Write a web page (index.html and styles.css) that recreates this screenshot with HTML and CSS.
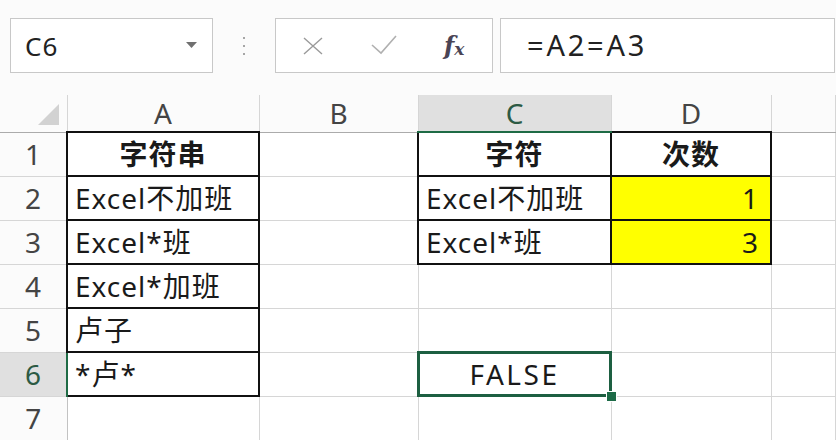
FILE: index.html
```html
<!DOCTYPE html>
<html lang="zh-CN">
<head>
    <meta charset="UTF-8">
    <title>Excel - C6</title>
    <link rel="stylesheet" href="styles.css">
</head>
<body>
    <div class="formula-bar">
        <div class="name-box">
            <span>C6</span>
            <svg class="caret" width="11" height="6" viewBox="0 0 11 6"><path d="M0 0 H11 L5.5 6 Z" fill="#707070"/></svg>
        </div>
        <div class="grip"><i></i><i></i><i></i></div>
        <div class="buttons">
            <svg class="btn-x" width="20" height="18" viewBox="0 0 20 18"><path d="M1 1 L19 17 M19 1 L1 17" stroke="#9a9a9a" stroke-width="1.4" fill="none"/></svg>
            <svg class="btn-ok" width="26" height="20" viewBox="0 0 26 20"><path d="M1 10 L10 18 L25 1" stroke="#b0b0b0" stroke-width="1.6" fill="none"/></svg>
            <span class="fx"><i>f</i><sub>x</sub></span>
        </div>
        <div class="formula-input">=A2=A3</div>
    </div>

    <table class="sheet">
        <colgroup>
            <col class="c-rh">
            <col class="c-a">
            <col class="c-b">
            <col class="c-c">
            <col class="c-d">
            <col>
        </colgroup>
        <tr class="head">
            <th class="corner"><span class="tri"></span></th>
            <th>A</th>
            <th>B</th>
            <th class="sel">C</th>
            <th>D</th>
            <th></th>
        </tr>
        <tr>
            <th class="rh">1</th>
            <td class="box bold center">字符串</td>
            <td></td>
            <td class="box bold center">字符</td>
            <td class="box bold center">次数</td>
            <td></td>
        </tr>
        <tr>
            <th class="rh">2</th>
            <td class="box">Excel不加班</td>
            <td></td>
            <td class="box">Excel不加班</td>
            <td class="box yellow num">1</td>
            <td></td>
        </tr>
        <tr>
            <th class="rh">3</th>
            <td class="box">Excel*班</td>
            <td></td>
            <td class="box">Excel*班</td>
            <td class="box yellow num">3</td>
            <td></td>
        </tr>
        <tr>
            <th class="rh">4</th>
            <td class="box">Excel*加班</td>
            <td></td>
            <td></td>
            <td></td>
            <td></td>
        </tr>
        <tr>
            <th class="rh">5</th>
            <td class="box">卢子</td>
            <td></td>
            <td></td>
            <td></td>
            <td></td>
        </tr>
        <tr>
            <th class="rh sel">6</th>
            <td class="box">*卢*</td>
            <td></td>
            <td class="active center">FALSE</td>
            <td></td>
            <td></td>
        </tr>
        <tr>
            <th class="rh">7</th>
            <td></td>
            <td></td>
            <td></td>
            <td></td>
            <td></td>
        </tr>
    </table>
</body>
</html>
```

FILE: styles.css
```css
body {
    margin: 0;
    background: #fbfbfb;
    font-family: "Noto Sans", "Noto Sans CJK SC", sans-serif;
    color: #1a1a1a;
    overflow: hidden;
}

/* formula bar */
.formula-bar {
    display: flex;
    align-items: flex-start;
    height: 95px;
    padding-top: 18px;
    box-sizing: border-box;
}
.name-box {
    margin-left: 10px;
    width: 203px;
    height: 55px;
    box-sizing: border-box;
    border: 1px solid #c8c8c8;
    background: #fff;
    display: flex;
    align-items: center;
    justify-content: space-between;
    padding: 0 15px 0 14px;
    font-size: 26px;
    letter-spacing: 1px;
    color: #222;
}
.name-box .caret {
    margin-top: -2px;
}
.grip {
    width: 62px;
    height: 55px;
    display: flex;
    flex-direction: column;
    align-items: center;
    justify-content: center;
    gap: 6px;
}
.grip i {
    width: 2px;
    height: 2px;
    background: #8a8a8a;
    border-radius: 1px;
}
.buttons {
    width: 218px;
    height: 55px;
    box-sizing: border-box;
    border: 1px solid #c8c8c8;
    background: #fff;
    display: flex;
    align-items: center;
}
.btn-x {
    margin-left: 27px;
}
.btn-ok {
    margin-left: 48px;
    margin-top: -2px;
}
.fx {
    margin-left: 47px;
    font-family: "DejaVu Serif", "Liberation Serif", serif;
    font-style: italic;
    font-weight: 600;
    color: #4a4455;
    font-size: 24px;
    line-height: 1;
}
.fx sub {
    font-size: 17px;
    vertical-align: -1px;
}
.formula-input {
    margin-left: 7px;
    width: 335px;
    height: 55px;
    box-sizing: border-box;
    border: 1px solid #c8c8c8;
    background: #fff;
    padding-left: 26px;
    font-size: 29px;
    letter-spacing: 2.8px;
    line-height: 52px;
    color: #222;
}

/* worksheet */
.sheet {
    border-collapse: collapse;
    table-layout: fixed;
    width: 836px;
    font-size: 28px;
}
.c-rh { width: 67px; }
.c-a { width: 192px; }
.c-b { width: 159px; }
.c-c { width: 193px; }
.c-d { width: 160px; }

.sheet tr {
    height: 44px;
}
.sheet tr.head {
    height: 37px;
}
.sheet th {
    font-weight: normal;
    color: #444;
    padding: 0;
    border: 1px solid #d6d6d6;
}
.head th {
    border-top: none;
    border-bottom: 1px solid #ababab;
    line-height: 36px;
}
.head th.sel {
    background: #e0e0e0;
    color: #2c5a44;
    border-bottom: 2px solid #1e6b45;
}
.corner {
    position: relative;
    border-left: none !important;
}
.tri {
    position: absolute;
    right: 8px;
    bottom: 7px;
    width: 0;
    height: 0;
    border-left: 21px solid transparent;
    border-bottom: 21px solid #d2d2d2;
}
.rh {
    border-left: none !important;
    border-right: 1px solid #c2c2c2 !important;
}
.rh.sel {
    background: #e0e0e0;
    color: #2c5a44;
    border-right: 2px solid #1e6b45 !important;
}

.sheet td {
    background: #fff;
    border: 1px solid #d6d6d6;
    padding: 0 7px;
    white-space: nowrap;
    overflow: hidden;
    line-height: 1;
    letter-spacing: 1px;
}
.sheet td.box {
    border: 2px solid #111;
}
.center {
    text-align: center;
}
.bold {
    font-weight: bold;
}
.yellow {
    background: #ffff00 !important;
}
.num {
    text-align: right;
    padding-right: 11px !important;
}
.sheet td.active {
    position: relative;
    overflow: visible;
    letter-spacing: 2.5px;
}
.active::before {
    content: "";
    position: absolute;
    top: -2px;
    left: -2px;
    right: -1px;
    bottom: -1px;
    border: 3px solid #1d5f41;
}
.active::after {
    content: "";
    position: absolute;
    right: -6px;
    bottom: -6px;
    width: 9px;
    height: 9px;
    background: #1d6b47;
    border: 1px solid #fff;
}
```
